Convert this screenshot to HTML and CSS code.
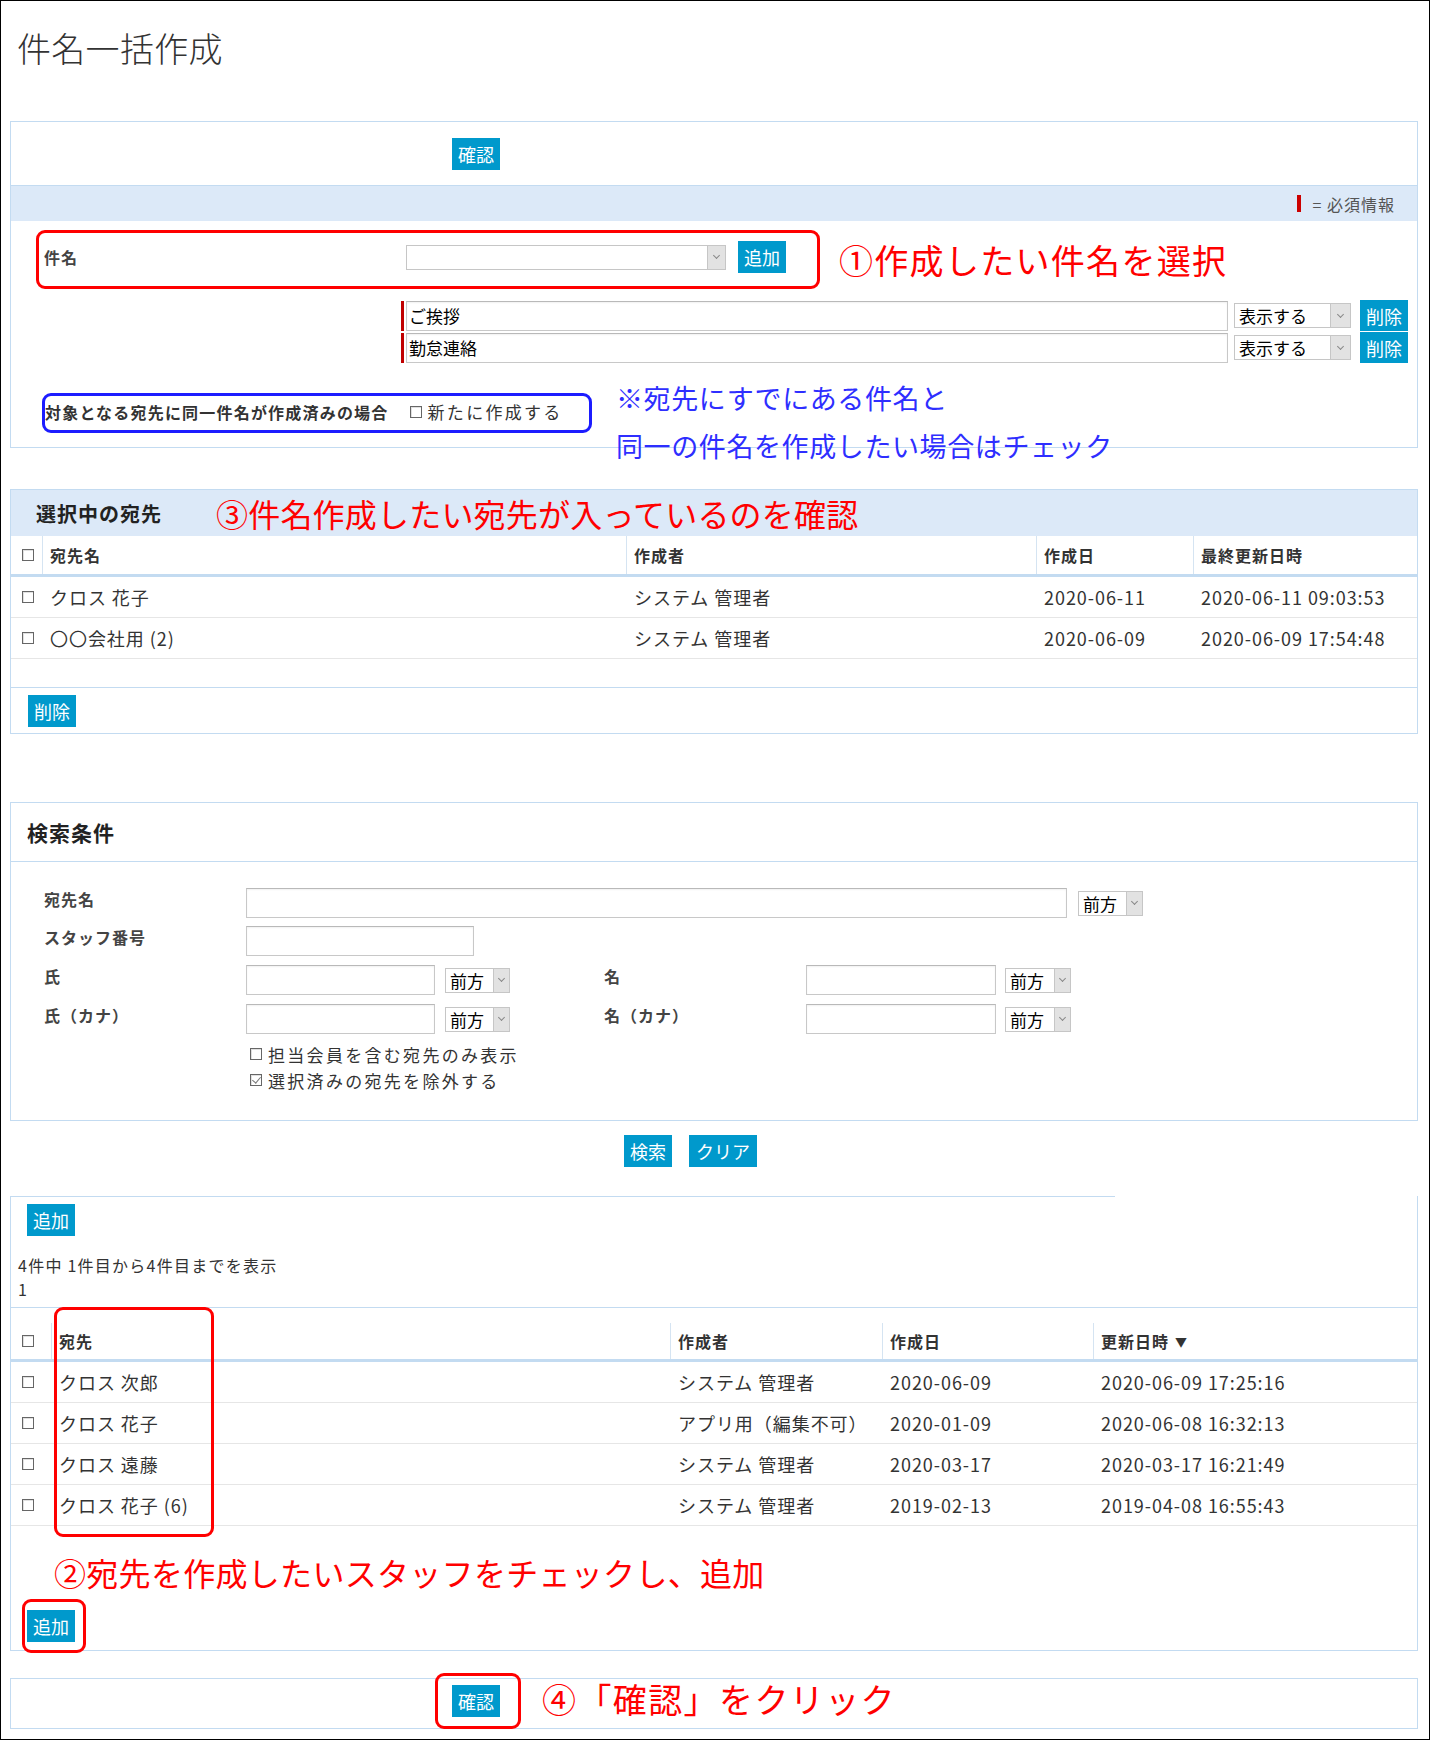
FILE: index.html
```html
<!DOCTYPE html>
<html lang="ja">
<head>
<meta charset="utf-8">
<title>件名一括作成</title>
<link rel="stylesheet" href="styles.css">
</head>
<body>
<div class="frame">
  <h1 class="page-title">件名一括作成</h1>

  <!-- subject selection -->
  <section class="panel subject-panel">
    <div class="confirm-row"><button class="btn">確認</button></div>
    <div class="req-band"><span class="req-mark"></span><span class="req-text">= 必須情報</span></div>

    <div class="pick-row">
      <div class="callout callout-red pick-box">
        <span class="field-label">件名</span>
        <span class="select select-subject"><span class="select-value"></span><span class="select-arrow"></span></span>
        <button class="btn">追加</button>
      </div>
      <span class="note note-red">①作成したい件名を選択</span>
    </div>

    <ul class="subject-list">
      <li class="subject-item">
        <span class="req-bar"></span>
        <span class="input subject-input">ご挨拶</span>
        <span class="select select-show"><span class="select-value">表示する</span><span class="select-arrow"></span></span>
        <button class="btn">削除</button>
      </li>
      <li class="subject-item">
        <span class="req-bar"></span>
        <span class="input subject-input">勤怠連絡</span>
        <span class="select select-show"><span class="select-value">表示する</span><span class="select-arrow"></span></span>
        <button class="btn">削除</button>
      </li>
    </ul>

    <div class="callout callout-blue dup-box">
      <span class="dup-label">対象となる宛先に同一件名が作成済みの場合</span>
      <span class="check"></span>
      <span class="check-text">新たに作成する</span>
    </div>

    <p class="note note-blue">※宛先にすでにある件名と<br>同一の件名を作成したい場合はチェック</p>
  </section>

  <!-- selected recipients -->
  <section class="panel selected-panel">
    <div class="sel-head">
      <h2>選択中の宛先</h2>
      <span class="note note-red">③件名作成したい宛先が入っているのを確認</span>
    </div>
    <div class="grid">
      <div class="grid-row grid-head sel-cols">
        <div class="cell cell-check"><span class="check"></span></div>
        <div class="cell">宛先名</div>
        <div class="cell">作成者</div>
        <div class="cell">作成日</div>
        <div class="cell">最終更新日時</div>
      </div>
      <div class="grid-body">
        <div class="grid-row sel-cols">
          <div class="cell cell-check"><span class="check"></span></div>
          <div class="cell">クロス 花子</div>
          <div class="cell">システム 管理者</div>
          <div class="cell">2020-06-11</div>
          <div class="cell">2020-06-11 09:03:53</div>
        </div>
        <div class="grid-row sel-cols">
          <div class="cell cell-check"><span class="check"></span></div>
          <div class="cell">〇〇会社用 (2)</div>
          <div class="cell">システム 管理者</div>
          <div class="cell">2020-06-09</div>
          <div class="cell">2020-06-09 17:54:48</div>
        </div>
      </div>
      <div class="grid-empty"></div>
    </div>
    <div class="sel-foot"><button class="btn">削除</button></div>
  </section>

  <!-- search conditions -->
  <section class="panel search-panel">
    <div class="search-head"><h2>検索条件</h2></div>
    <div class="search-body">
      <div class="form-row">
        <span class="form-label">宛先名</span>
        <span class="input input-name"></span>
        <span class="select select-mode select-mode-wide"><span class="select-value">前方</span><span class="select-arrow"></span></span>
      </div>
      <div class="form-row">
        <span class="form-label">スタッフ番号</span>
        <span class="input input-staff"></span>
      </div>
      <div class="form-row">
        <span class="form-label">氏</span>
        <span class="input input-half"></span>
        <span class="select select-mode"><span class="select-value">前方</span><span class="select-arrow"></span></span>
        <span class="form-spacer"></span>
        <span class="form-label">名</span>
        <span class="input input-half2"></span>
        <span class="select select-mode select-mode-r"><span class="select-value">前方</span><span class="select-arrow"></span></span>
      </div>
      <div class="form-row">
        <span class="form-label">氏（カナ）</span>
        <span class="input input-half"></span>
        <span class="select select-mode"><span class="select-value">前方</span><span class="select-arrow"></span></span>
        <span class="form-spacer"></span>
        <span class="form-label">名（カナ）</span>
        <span class="input input-half2"></span>
        <span class="select select-mode select-mode-r"><span class="select-value">前方</span><span class="select-arrow"></span></span>
      </div>
      <div class="check-lines">
        <div class="check-line"><span class="check"></span><span class="check-label">担当会員を含む宛先のみ表示</span></div>
        <div class="check-line"><span class="check is-on"></span><span class="check-label">選択済みの宛先を除外する</span></div>
      </div>
    </div>
  </section>

  <div class="search-actions">
    <button class="btn">検索</button>
    <button class="btn btn-wide">クリア</button>
  </div>

  <!-- search results -->
  <section class="panel result-panel">
    <div class="result-top"><button class="btn">追加</button></div>
    <p class="result-count">4件中 1件目から4件目までを表示<br>1</p>
    <div class="result-divider"></div>
    <div class="grid result-grid">
      <div class="grid-row grid-head res-cols">
        <div class="cell cell-check"><span class="check"></span></div>
        <div class="cell">宛先</div>
        <div class="cell">作成者</div>
        <div class="cell">作成日</div>
        <div class="cell">更新日時 <span class="sort-mark">▼</span></div>
      </div>
      <div class="grid-body">
        <div class="grid-row res-cols">
          <div class="cell cell-check"><span class="check"></span></div>
          <div class="cell">クロス 次郎</div>
          <div class="cell">システム 管理者</div>
          <div class="cell">2020-06-09</div>
          <div class="cell">2020-06-09 17:25:16</div>
        </div>
        <div class="grid-row res-cols">
          <div class="cell cell-check"><span class="check"></span></div>
          <div class="cell">クロス 花子</div>
          <div class="cell">アプリ用（編集不可）</div>
          <div class="cell">2020-01-09</div>
          <div class="cell">2020-06-08 16:32:13</div>
        </div>
        <div class="grid-row res-cols">
          <div class="cell cell-check"><span class="check"></span></div>
          <div class="cell">クロス 遠藤</div>
          <div class="cell">システム 管理者</div>
          <div class="cell">2020-03-17</div>
          <div class="cell">2020-03-17 16:21:49</div>
        </div>
        <div class="grid-row res-cols">
          <div class="cell cell-check"><span class="check"></span></div>
          <div class="cell">クロス 花子 (6)</div>
          <div class="cell">システム 管理者</div>
          <div class="cell">2019-02-13</div>
          <div class="cell">2019-04-08 16:55:43</div>
        </div>
      </div>
    </div>
    <p class="note note-red result-note">②宛先を作成したいスタッフをチェックし、追加</p>
    <div class="callout callout-red add-callout"><button class="btn">追加</button></div>
    <div class="callout callout-red column-callout"></div>
  </section>

  <!-- final confirmation -->
  <section class="panel confirm-panel">
    <div class="callout callout-red confirm-callout"><button class="btn">確認</button></div>
    <span class="note note-red confirm-note">④「確認」をクリック</span>
  </section>
</div>
</body>
</html>
```

FILE: styles.css
```css
* { box-sizing: border-box; }

html, body {
  margin: 0;
  padding: 0;
  background: #fff;
}

body {
  font-family: "Noto Sans CJK JP", "Noto Sans", sans-serif;
  color: #333;
}

button { font-family: inherit; }

.frame {
  width: 1430px;
  height: 1740px;
  border: 1px solid #000;
  padding: 0 0 0 9px;
  overflow: hidden;
}

.page-title {
  margin: 0 0 47px;
  padding: 22px 0 0 7px;
  height: 73px;
  font-size: 34px;
  line-height: 50px;
  font-weight: 300;
  letter-spacing: 0.3px;
  color: #333;
}

/* shared pieces */
.panel {
  position: relative;
  width: 1408px;
  border: 1px solid #c3dbf1;
  background: #fff;
}

.btn {
  display: inline-flex;
  align-items: center;
  justify-content: center;
  height: 32px;
  min-width: 48px;
  padding: 0 6px;
  border: 0;
  border-radius: 0;
  background: #0099cc;
  color: #fff;
  font-size: 18px;
  line-height: 1;
}
.btn-wide { padding: 0 7px; min-width: 68px; }

.callout {
  border: 3px solid;
  border-radius: 9px;
}
.callout-red { border-color: #ff0000; }
.callout-blue { border-color: #1c1cff; }

.note {
  margin: 0;
  font-weight: 400;
  white-space: nowrap;
}
.note-red { color: #ff0000; }

.input {
  display: inline-block;
  height: 30px;
  border: 1px solid #c8c8c8;
  border-top-color: #b9b9b9;
  background: #fff;
  box-shadow: inset 0 1px 2px rgba(0, 0, 0, 0.06);
}

.select {
  display: inline-flex;
  align-items: stretch;
  height: 25px;
  border: 1px solid #c6c6c6;
  background: #fff;
  font-size: 17px;
  color: #000;
}
.select-value {
  flex: 1;
  padding-left: 4px;
  line-height: 24px;
  white-space: nowrap;
}
.select-arrow {
  display: flex;
  align-items: center;
  justify-content: center;
  width: 18px;
  background: #e2e2e2;
  border-left: 1px solid #c6c6c6;
}
.select-arrow::after {
  content: "";
  width: 4px;
  height: 4px;
  margin-top: -3px;
  border-right: 1px solid #888;
  border-bottom: 1px solid #888;
  transform: rotate(45deg);
}

.check {
  position: relative;
  display: inline-block;
  flex: none;
  width: 12px;
  height: 12px;
  border: 1px solid #666;
  background: #fff;
  box-shadow: inset 1px 1px 0 #e0e0e0;
}
.check.is-on::after {
  content: "";
  position: absolute;
  left: 3px;
  top: 0;
  width: 4px;
  height: 7px;
  border-right: 1.5px solid #777;
  border-bottom: 1.5px solid #777;
  transform: rotate(40deg);
}

/* subject panel */
.confirm-row {
  height: 63px;
  padding: 16px 0 0 441px;
}

.req-band {
  display: flex;
  align-items: center;
  justify-content: flex-end;
  height: 36px;
  padding-right: 22px;
  border-top: 1px solid #c3dbf1;
  background: #dce9f8;
}
.req-mark {
  width: 4px;
  height: 17px;
  margin-right: 12px;
  background: #cc0000;
}
.req-text {
  font-size: 16px;
  letter-spacing: 1px;
  color: #555;
}

.pick-row {
  display: flex;
  align-items: center;
  margin: 9px 0 0 25px;
}
.pick-box {
  display: flex;
  align-items: center;
  width: 784px;
  height: 59px;
  padding: 0 0 5px 5px;
}
.field-label {
  width: 362px;
  font-size: 16px;
  font-weight: 700;
  letter-spacing: 1px;
  color: #444;
}
.select-subject { width: 320px; }
.pick-box .btn { margin-left: 12px; }
.pick-row .note {
  margin-left: 19px;
  font-size: 34px;
  line-height: 40px;
  letter-spacing: 1.3px;
}

.subject-list {
  display: flex;
  flex-direction: column;
  gap: 1px;
  margin: 11px 0 0;
  padding: 0 0 0 390px;
  list-style: none;
}
.subject-item {
  display: flex;
  align-items: center;
  height: 31px;
}
.req-bar {
  width: 3px;
  height: 30px;
  margin-right: 2px;
  background: #c00000;
}
.subject-input {
  width: 822px;
  padding-left: 2px;
  font-size: 17px;
  line-height: 28px;
  color: #000;
}
.select-show {
  width: 117px;
  margin-left: 6px;
}
.select-show .select-arrow { width: 20px; }
.subject-item .btn {
  height: 31px;
  margin-left: 9px;
}

.dup-box {
  display: flex;
  align-items: center;
  width: 550px;
  height: 40px;
  margin: 30px 0 14px 31px;
  padding-bottom: 3px;
}
.dup-label {
  font-size: 16px;
  font-weight: 700;
  letter-spacing: 1.2px;
  color: #333;
}
.dup-box .check { margin-left: 21px; }
.check-text {
  margin-left: 6px;
  font-size: 17px;
  letter-spacing: 2.3px;
  color: #333;
}

.note-blue {
  position: absolute;
  left: 605px;
  top: 252px;
  font-size: 27px;
  line-height: 48px;
  letter-spacing: 0.6px;
  color: #2e2eff;
}

/* tables */
.grid-row { display: grid; }
.sel-cols { grid-template-columns: 31px 584px 410px 157px 224px; }
.res-cols { grid-template-columns: 40px 619px 212px 211px 324px; }

.cell {
  display: flex;
  align-items: center;
  padding-left: 8px;
  white-space: nowrap;
}
.cell.cell-check { padding-left: 11px; }

.grid-head {
  height: 41px;
  border-bottom: 3px solid #c3dbf1;
}
.grid-head .cell {
  padding-left: 7px;
  border-left: 1px solid #d5e4f2;
  font-size: 16px;
  font-weight: 700;
  letter-spacing: 1px;
  color: #333;
}
.grid-head .cell.cell-check {
  padding-left: 11px;
  border-left: 0;
}

.grid-body .grid-row {
  height: 41px;
  border-bottom: 1px solid #e6e6e6;
}
.grid-body .cell {
  font-size: 18px;
  letter-spacing: 0.95px;
  color: #333;
}

.sort-mark {
  margin-left: 6px;
  font-size: 12px;
}

/* selected recipients panel */
.selected-panel { margin-top: 41px; }
.sel-head {
  display: flex;
  align-items: center;
  height: 46px;
  padding-left: 25px;
  background: #dce9f8;
}
.sel-head h2 {
  margin: 0;
  font-size: 20px;
  font-weight: 700;
  letter-spacing: 1px;
  color: #222;
}
.sel-head .note {
  margin-left: 54px;
  font-size: 32px;
  line-height: 40px;
  letter-spacing: 0.2px;
}
.grid-empty { height: 28px; }
.sel-foot {
  height: 46px;
  padding: 7px 0 0 17px;
  border-top: 1px solid #c3dbf1;
}

/* search panel */
.search-panel { margin-top: 68px; }
.search-head {
  display: flex;
  align-items: center;
  height: 59px;
  padding-left: 16px;
  border-bottom: 1px solid #c3dbf1;
}
.search-head h2 {
  margin: 0;
  font-size: 21px;
  font-weight: 700;
  letter-spacing: 1px;
  color: #222;
}
.search-body { padding: 26px 0 27px 33px; }

.form-row {
  display: flex;
  align-items: center;
  height: 30px;
  margin-top: 9px;
}
.form-row:first-child { margin-top: 0; }
.form-row:nth-child(2) { margin-top: 8px; }
.form-label {
  width: 202px;
  flex: none;
  margin-bottom: 8px;
  font-size: 16px;
  font-weight: 700;
  letter-spacing: 1px;
  color: #444;
}
.input-name { width: 821px; }
.input-staff { width: 228px; }
.input-half { width: 189px; }
.input-half2 { width: 190px; }
.select-mode {
  width: 65px;
  margin-left: 10px;
}
.select-mode .select-arrow { width: 16px; }
.select-mode-wide { margin-left: 11px; }
.select-mode-r {
  width: 66px;
  margin-left: 9px;
}
.form-spacer { width: 94px; flex: none; }

.check-lines {
  margin-top: 7px;
  padding-left: 206px;
}
.check-line {
  display: flex;
  align-items: center;
  height: 26px;
}
.check-label {
  margin-left: 6px;
  font-size: 17px;
  letter-spacing: 2.3px;
  color: #333;
}

.search-actions {
  display: flex;
  gap: 17px;
  height: 75px;
  padding: 14px 0 0 614px;
}

/* result panel: top rule stops short of the right edge */
.result-panel {
  border-top: 0;
  padding-top: 1px;
}
.result-panel::before {
  content: "";
  position: absolute;
  top: 0;
  left: -1px;
  width: 1105px;
  height: 1px;
  background: #c3dbf1;
}
.result-top { padding: 7px 0 0 16px; }
.result-count {
  margin: 17px 0 0;
  padding-left: 7px;
  font-size: 16px;
  line-height: 24px;
  letter-spacing: 1.25px;
  color: #333;
}
.result-divider {
  margin-top: 6px;
  border-top: 1px solid #c3dbf1;
}
.result-grid { margin-top: 15px; }
.result-grid .grid-head { height: 39px; }

.result-note {
  margin-top: 26px;
  padding-left: 43px;
  font-size: 32px;
  line-height: 40px;
  letter-spacing: 0.3px;
}
.add-callout {
  width: 64px;
  height: 54px;
  margin: 7px 0 -3px 11px;
  padding: 8px 0 0 2px;
}
.column-callout {
  position: absolute;
  left: 43px;
  top: 111px;
  width: 160px;
  height: 230px;
  z-index: 2;
}

/* confirm panel */
.confirm-panel {
  display: flex;
  align-items: flex-start;
  height: 51px;
  margin-top: 27px;
  padding-left: 424px;
}
.confirm-callout {
  width: 86px;
  height: 56px;
  margin-top: -6px;
  padding: 9px 0 0 14px;
}
.confirm-note {
  align-self: center;
  margin: -10px 0 0 21px;
  font-size: 34px;
  line-height: 40px;
  letter-spacing: 1.4px;
}
```
